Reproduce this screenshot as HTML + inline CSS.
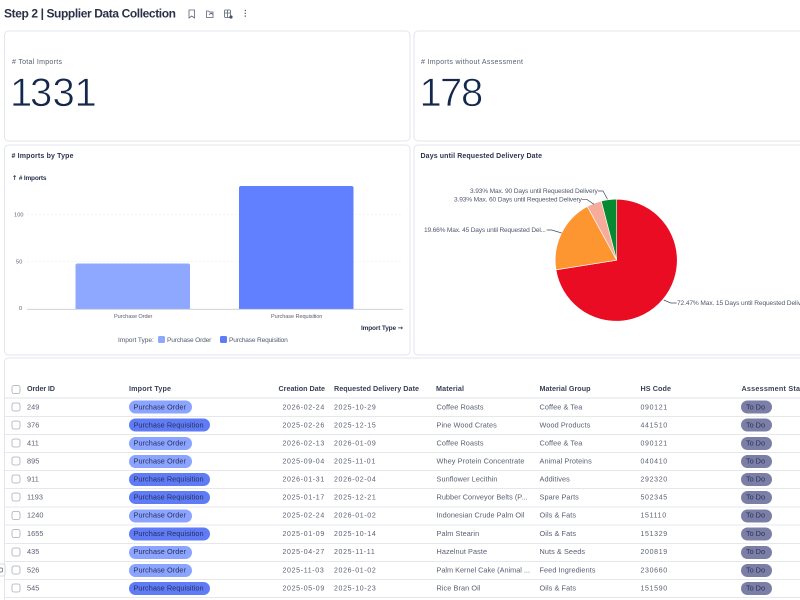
<!DOCTYPE html>
<html>
<head>
<meta charset="utf-8">
<style>
html,body{margin:0;padding:0;background:#fff;width:800px;height:600px;overflow:hidden}
svg{display:block;font-family:"Liberation Sans",sans-serif;filter:blur(.25px)}
.card{fill:#fff;stroke:#e3e5ec;stroke-width:1}
.b{font-weight:700;fill:#2b3450}
.h{font-size:7.200px;font-weight:700;fill:#3a4258}
.c{font-size:7.300px;fill:#5a6074;letter-spacing:.08px}
.d{font-size:7px;fill:#5a6074;letter-spacing:.66px}
.p{font-size:7.300px;fill:#28305a}
.l{font-size:6.600px;fill:#535a72;letter-spacing:.2px}
.s{font-size:5.600px;fill:#5a6074;letter-spacing:.1px}
.cb{fill:#fff;stroke:#a9adb8;stroke-width:.8}
.ln{stroke:#e6e7ec;stroke-width:1}
.po{fill:#8ba4ff}
.pr{fill:#5f7cf6}
.td{fill:#7b7fa6}
.icon{fill:none;stroke:#5a6276;stroke-width:.8}
.lead{fill:none;stroke:#3f4a66;stroke-width:.7}
.big{font-size:40px;fill:#14284b;stroke:#fff;stroke-width:.7px}
.ar{font-family:"DejaVu Sans",sans-serif}
</style>
</head>
<body>
<svg width="800" height="600" viewBox="0 0 800 600" xmlns="http://www.w3.org/2000/svg">
<text x="4" y="17.500" font-size="12" class="b" textLength="172" style="fill:#2a3148">Step 2 | Supplier Data Collection</text>
<path class="icon" d="M189 10h5.500v8l-2.750-2-2.750 2z"/>
<path class="icon" d="M206.500 11h2l1 1h3.500v5.500h-6.500zM209 15l2-2 2 1.500"/>
<rect x="224.500" y="10" width="6" height="7.500" rx="1" class="icon"/><path class="icon" d="M224.500 13h6M227.500 10v7.500"/><circle cx="231" cy="17" r="1.600" fill="#4a5268"/>
<circle cx="245.300" cy="10.500" r=".7" fill="#4a5268"/><circle cx="245.300" cy="13.300" r=".7" fill="#4a5268"/><circle cx="245.300" cy="16.100" r=".7" fill="#4a5268"/>

<rect class="card" x="4.500" y="31" width="405.500" height="110" rx="4"/>
<rect class="card" x="414" y="31" width="400" height="110" rx="4"/>
<rect class="card" x="4.500" y="145" width="405.500" height="210" rx="4"/>
<rect class="card" x="414" y="145" width="400" height="210" rx="4"/>
<rect class="card" x="4.500" y="358" width="810" height="260" rx="4"/>

<text x="12" y="64" font-size="7" fill="#5a6074" textLength="50">&#35; Total Imports</text>
<text x="421" y="64" font-size="7" fill="#5a6074" textLength="102">&#35; Imports without Assessment</text>
<text x="10 30 52.500 74.500" y="106" class="big">1331</text>
<text x="419.500 440 461" y="106" class="big">178</text>

<text x="11.500" y="158" font-size="7" class="b" textLength="62">&#35; Imports by Type</text>
<text x="12" y="180" font-size="6.500" class="b" textLength="34.500"><tspan class="ar">↑</tspan> &#35; Imports</text>
<text x="14" y="216.500" class="s">100</text><text x="16" y="263.500" class="s">50</text><text x="19" y="310" class="s">0</text>
<path d="M27 214.500H403M27 261.500H403" stroke="#f0f1f4" stroke-width=".8" stroke-dasharray="2 2"/>
<path d="M75.500 309v-43.500a2 2 0 0 1 2-2h110.500a2 2 0 0 1 2 2V309z" fill="#8fa8ff"/>
<path d="M239 309V188a2 2 0 0 1 2-2h110.500a2 2 0 0 1 2 2V309z" fill="#6080ff"/>
<path d="M27 309.300H403" stroke="#c8cbd3" stroke-width=".8"/>
<text x="114" y="318" class="s" textLength="38.500">Purchase Order</text>
<text x="271" y="318" class="s" textLength="51.500">Purchase Requisition</text>
<text x="361" y="330" font-size="6.500" class="b" textLength="42">Import Type <tspan class="ar">→</tspan></text>
<text x="118" y="342" class="l" textLength="36">Import Type:</text>
<rect x="158" y="336" width="7" height="7" rx="1.500" fill="#8fa8ff"/>
<text x="167" y="342" class="l" textLength="44.500">Purchase Order</text>
<rect x="220" y="336" width="7" height="7" rx="1.500" fill="#5f7cf6"/>
<text x="229" y="342" class="l" textLength="59">Purchase Requisition</text>

<text x="420.500" y="158" font-size="7" class="b" textLength="121.500">Days until Requested Delivery Date</text>
<path d="M616.700 199.200A61 61 0 1 1 556 269.850L616.700 260.200Z" fill="#ea0c22" stroke="#fff" stroke-width=".6"/>
<path d="M556 269.850A61 61 0 0 1 587.300 206.500L616.700 260.200Z" fill="#fd9531" stroke="#fff" stroke-width=".6"/>
<path d="M587.300 206.500A61 61 0 0 1 601.300 201.050L616.700 260.200Z" fill="#f7ac9b" stroke="#fff" stroke-width=".6"/>
<path d="M601.300 201.050A61 61 0 0 1 616.700 199.200L616.700 260.200Z" fill="#058a31" stroke="#fff" stroke-width=".6"/>
<path class="lead" d="M598 191h5l4.500 8.300M581.700 199.300h5l7.300 5M546.700 230h5l10 3M676.700 303h-6l-7-3"/>
<text x="470" y="193" class="l" textLength="128">3.93% Max. 90 Days until Requested Delivery</text>
<text x="454" y="201.500" class="l" textLength="128">3.93% Max. 60 Days until Requested Delivery</text>
<text x="424" y="232" class="l" textLength="122">19.66% Max. 45 Days until Requested Del...</text>
<text x="677" y="305" class="l" textLength="133">72.47% Max. 15 Days until Requested Delivery</text>

<rect class="cb" x="12" y="385.500" width="8" height="8" rx="2"/>
<text x="27" y="391" class="h" textLength="28">Order ID</text>
<text x="129" y="391" class="h" textLength="42">Import Type</text>
<text x="278.500" y="391" class="h" textLength="46.500">Creation Date</text>
<text x="334" y="391" class="h" textLength="85">Requested Delivery Date</text>
<text x="436" y="391" class="h" textLength="28">Material</text>
<text x="539.500" y="391" class="h" textLength="51">Material Group</text>
<text x="640.500" y="391" class="h" textLength="30.500">HS Code</text>
<text x="741.500" y="391" class="h" textLength="70">Assessment Status</text>

<path class="ln" d="M5 398H800M5 416.500H800M5 434.500H800M5 452.500H800M5 470.500H800M5 488.500H800M5 507H800M5 525H800M5 543.500H800M5 561.500H800M5 579.500H800M5 597.500H800"/>
<path d="M5 398H800" stroke="#e1e3e9" stroke-width="1"/>

<g>
<rect class="cb" x="12" y="403" width="8" height="8" rx="2"/><text x="27" y="409.500" class="c">249</text>
<rect class="po" x="129" y="400.500" width="63" height="13" rx="6.500"/><text x="133.500" y="409.500" class="p" textLength="52.500">Purchase Order</text>
<text x="282.500" y="409.500" class="d">2026-02-24</text><text x="334" y="409.500" class="d">2025-10-29</text>
<text x="436.500" y="409.500" class="c">Coffee Roasts</text><text x="539.500" y="409.500" class="c">Coffee &amp; Tea</text><text x="640.500" y="409.500" class="d">090121</text>
<rect class="td" x="741" y="400.500" width="31" height="13" rx="6.500"/><text x="746" y="409.500" class="p" textLength="19">To Do</text>
</g>
<g>
<rect class="cb" x="12" y="421" width="8" height="8" rx="2"/><text x="27" y="427.500" class="c">376</text>
<rect class="pr" x="129" y="418.500" width="81" height="13" rx="6.500"/><text x="133.500" y="427.500" class="p" textLength="70">Purchase Requisition</text>
<text x="282.500" y="427.500" class="d">2025-02-26</text><text x="334" y="427.500" class="d">2025-12-15</text>
<text x="436.500" y="427.500" class="c">Pine Wood Crates</text><text x="539.500" y="427.500" class="c">Wood Products</text><text x="640.500" y="427.500" class="d">441510</text>
<rect class="td" x="741" y="418.500" width="31" height="13" rx="6.500"/><text x="746" y="427.500" class="p" textLength="19">To Do</text>
</g>
<g>
<rect class="cb" x="12" y="439" width="8" height="8" rx="2"/><text x="27" y="445.500" class="c">411</text>
<rect class="po" x="129" y="437" width="63" height="13" rx="6.500"/><text x="133.500" y="445.500" class="p" textLength="52.500">Purchase Order</text>
<text x="282.500" y="445.500" class="d">2026-02-13</text><text x="334" y="445.500" class="d">2026-01-09</text>
<text x="436.500" y="445.500" class="c">Coffee Roasts</text><text x="539.500" y="445.500" class="c">Coffee &amp; Tea</text><text x="640.500" y="445.500" class="d">090121</text>
<rect class="td" x="741" y="437" width="31" height="13" rx="6.500"/><text x="746" y="445.500" class="p" textLength="19">To Do</text>
</g>
<g>
<rect class="cb" x="12" y="457" width="8" height="8" rx="2"/><text x="27" y="463.500" class="c">895</text>
<rect class="po" x="129" y="455" width="63" height="13" rx="6.500"/><text x="133.500" y="463.500" class="p" textLength="52.500">Purchase Order</text>
<text x="282.500" y="463.500" class="d">2025-09-04</text><text x="334" y="463.500" class="d">2025-11-01</text>
<text x="436.500" y="463.500" class="c" textLength="88">Whey Protein Concentrate</text><text x="539.500" y="463.500" class="c">Animal Proteins</text><text x="640.500" y="463.500" class="d">040410</text>
<rect class="td" x="741" y="455" width="31" height="13" rx="6.500"/><text x="746" y="463.500" class="p" textLength="19">To Do</text>
</g>
<g>
<rect class="cb" x="12" y="475" width="8" height="8" rx="2"/><text x="27" y="481.500" class="c">911</text>
<rect class="pr" x="129" y="473" width="81" height="13" rx="6.500"/><text x="133.500" y="481.500" class="p" textLength="70">Purchase Requisition</text>
<text x="282.500" y="481.500" class="d">2026-01-31</text><text x="334" y="481.500" class="d">2026-02-04</text>
<text x="436.500" y="481.500" class="c">Sunflower Lecithin</text><text x="539.500" y="481.500" class="c">Additives</text><text x="640.500" y="481.500" class="d">292320</text>
<rect class="td" x="741" y="473" width="31" height="13" rx="6.500"/><text x="746" y="481.500" class="p" textLength="19">To Do</text>
</g>
<g>
<rect class="cb" x="12" y="493" width="8" height="8" rx="2"/><text x="27" y="499.500" class="c">1193</text>
<rect class="pr" x="129" y="491" width="81" height="13" rx="6.500"/><text x="133.500" y="499.500" class="p" textLength="70">Purchase Requisition</text>
<text x="282.500" y="499.500" class="d">2025-01-17</text><text x="334" y="499.500" class="d">2025-12-21</text>
<text x="436.500" y="499.500" class="c" textLength="91">Rubber Conveyor Belts (P...</text><text x="539.500" y="499.500" class="c">Spare Parts</text><text x="640.500" y="499.500" class="d">502345</text>
<rect class="td" x="741" y="491" width="31" height="13" rx="6.500"/><text x="746" y="499.500" class="p" textLength="19">To Do</text>
</g>
<g>
<rect class="cb" x="12" y="511.500" width="8" height="8" rx="2"/><text x="27" y="517.500" class="c">1240</text>
<rect class="po" x="129" y="509.500" width="63" height="13" rx="6.500"/><text x="133.500" y="517.500" class="p" textLength="52.500">Purchase Order</text>
<text x="282.500" y="517.500" class="d">2025-02-24</text><text x="334" y="517.500" class="d">2026-01-02</text>
<text x="436.500" y="517.500" class="c" textLength="88">Indonesian Crude Palm Oil</text><text x="539.500" y="517.500" class="c">Oils &amp; Fats</text><text x="640.500" y="517.500" class="d">151110</text>
<rect class="td" x="741" y="509.500" width="31" height="13" rx="6.500"/><text x="746" y="517.500" class="p" textLength="19">To Do</text>
</g>
<g>
<rect class="cb" x="12" y="529.500" width="8" height="8" rx="2"/><text x="27" y="536" class="c">1655</text>
<rect class="pr" x="129" y="527.500" width="81" height="13" rx="6.500"/><text x="133.500" y="536" class="p" textLength="70">Purchase Requisition</text>
<text x="282.500" y="536" class="d">2025-01-09</text><text x="334" y="536" class="d">2025-10-14</text>
<text x="436.500" y="536" class="c">Palm Stearin</text><text x="539.500" y="536" class="c">Oils &amp; Fats</text><text x="640.500" y="536" class="d">151329</text>
<rect class="td" x="741" y="527.500" width="31" height="13" rx="6.500"/><text x="746" y="536" class="p" textLength="19">To Do</text>
</g>
<g>
<rect class="cb" x="12" y="548" width="8" height="8" rx="2"/><text x="27" y="554" class="c">435</text>
<rect class="po" x="129" y="546" width="63" height="13" rx="6.500"/><text x="133.500" y="554" class="p" textLength="52.500">Purchase Order</text>
<text x="282.500" y="554" class="d">2025-04-27</text><text x="334" y="554" class="d">2025-11-11</text>
<text x="436.500" y="554" class="c">Hazelnut Paste</text><text x="539.500" y="554" class="c">Nuts &amp; Seeds</text><text x="640.500" y="554" class="d">200819</text>
<rect class="td" x="741" y="546" width="31" height="13" rx="6.500"/><text x="746" y="554" class="p" textLength="19">To Do</text>
</g>
<g>
<rect class="cb" x="12" y="566" width="8" height="8" rx="2"/><text x="27" y="572.500" class="c">526</text>
<rect class="po" x="129" y="564" width="63" height="13" rx="6.500"/><text x="133.500" y="572.500" class="p" textLength="52.500">Purchase Order</text>
<text x="282.500" y="572.500" class="d">2025-11-03</text><text x="334" y="572.500" class="d">2026-01-02</text>
<text x="436.500" y="572.500" class="c" textLength="93.500">Palm Kernel Cake (Animal ...</text><text x="539.500" y="572.500" class="c">Feed Ingredients</text><text x="640.500" y="572.500" class="d">230660</text>
<rect class="td" x="741" y="564" width="31" height="13" rx="6.500"/><text x="746" y="572.500" class="p" textLength="19">To Do</text>
</g>
<g>
<rect class="cb" x="12" y="584" width="8" height="8" rx="2"/><text x="27" y="590.500" class="c">545</text>
<rect class="pr" x="129" y="582" width="81" height="13" rx="6.500"/><text x="133.500" y="590.500" class="p" textLength="70">Purchase Requisition</text>
<text x="282.500" y="590.500" class="d">2025-05-09</text><text x="334" y="590.500" class="d">2025-10-23</text>
<text x="436.500" y="590.500" class="c">Rice Bran Oil</text><text x="539.500" y="590.500" class="c">Oils &amp; Fats</text><text x="640.500" y="590.500" class="d">151590</text>
<rect class="td" x="741" y="582" width="31" height="13" rx="6.500"/><text x="746" y="590.500" class="p" textLength="19">To Do</text>
</g>
<rect x="-5" y="564" width="10" height="12" rx="2" fill="#fff" stroke="#c9ccd4" stroke-width=".8"/>
<rect x="-1" y="568" width="3.500" height="4" rx="1" fill="none" stroke="#5a6074" stroke-width=".7"/>
</svg>
</body>
</html>
